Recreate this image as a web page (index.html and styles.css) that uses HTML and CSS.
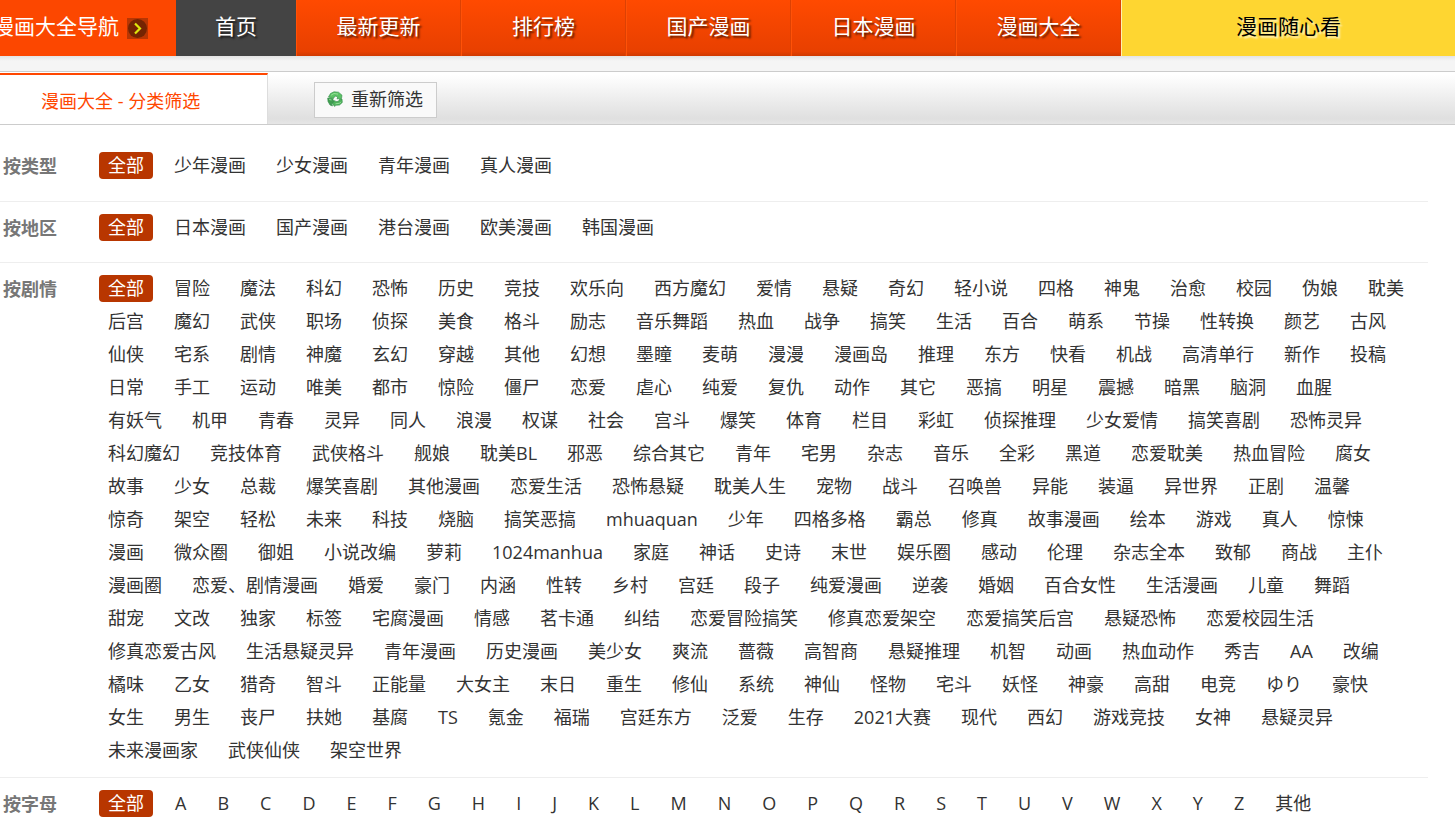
FILE: index.html
```html
<!DOCTYPE html>
<html lang="zh-CN">
<head>
<meta charset="utf-8">
<title>漫画大全 - 分类筛选</title>
<link rel="stylesheet" href="styles.css">
</head>
<body>
<header class="topbar">
  <div class="brand">
    <span class="brand-text">漫画大全导航</span>
    <svg class="brand-icon" viewBox="0 0 21 21" aria-hidden="true">
      <rect width="21" height="21" fill="#b83603"/>
      <circle cx="10.5" cy="10.5" r="9.5" fill="#742402"/>
      <path d="M8 5.500l5 5-5 5" fill="none" stroke="#dfe80c" stroke-width="2.2"/>
    </svg>
  </div>
  <nav class="menu">
    <a class="menu-item current" href="#">首页</a>
    <a class="menu-item" href="#">最新更新</a>
    <a class="menu-item" href="#">排行榜</a>
    <a class="menu-item" href="#">国产漫画</a>
    <a class="menu-item" href="#">日本漫画</a>
    <a class="menu-item" href="#">漫画大全</a>
    <a class="menu-item random" href="#">漫画随心看</a>
  </nav>
</header>
<main>
  <div class="tabs">
    <h1 class="tab">漫画大全 - 分类筛选</h1>
    <button class="reset" type="button">
      <svg class="reset-icon" viewBox="0 0 16 16" aria-hidden="true">
        <g stroke="#2f8a45" stroke-width=".6" stroke-linejoin="round">
          <path d="M1.500 6L3.500 2.500 7 .8l4.500.4 3.500 3-.5 3.300-4.500.3.8-2L8 5 6.500 7.500z" fill="#5cc266"/>
          <path d="M15 8l.3 3.500-2.800 2.500-4 .3-.8 1.200-3-3.500 3.300-2.500.8 1.200 2.700-.4 1-2z" fill="#4fb35c"/>
          <path d="M.7 7l4.800.6L7 10.500l-2.500 2 1 2.500-2.500-1L1 10.500z" fill="#3f9d50"/>
        </g>
        <path d="M4 4.200l3-1.700 4 .6M8.500 12.800l4-.5 1.500-1.500M2.200 8.500l2.300.5" fill="none" stroke="#9be29c" stroke-width=".9"/>
      </svg>
      <span>重新筛选</span>
    </button>
  </div>
  <div class="filters">
    <section class="filter">
      <h2 class="label">按类型</h2>
      <div class="options">
        <a class="active" href="#">全部</a><a href="#">少年漫画</a><a href="#">少女漫画</a><a href="#">青年漫画</a><a href="#">真人漫画</a>
      </div>
    </section>
    <section class="filter">
      <h2 class="label">按地区</h2>
      <div class="options">
        <a class="active" href="#">全部</a><a href="#">日本漫画</a><a href="#">国产漫画</a><a href="#">港台漫画</a><a href="#">欧美漫画</a><a href="#">韩国漫画</a>
      </div>
    </section>
    <section class="filter">
      <h2 class="label">按剧情</h2>
      <div class="options">
        <a class="active" href="#">全部</a><a href="#">冒险</a><a href="#">魔法</a><a href="#">科幻</a><a href="#">恐怖</a><a href="#">历史</a><a href="#">竞技</a><a href="#">欢乐向</a><a href="#">西方魔幻</a><a href="#">爱情</a><a href="#">悬疑</a><a href="#">奇幻</a><a href="#">轻小说</a><a href="#">四格</a><a href="#">神鬼</a><a href="#">治愈</a><a href="#">校园</a><a href="#">伪娘</a><a href="#">耽美</a>
        <a href="#">后宫</a><a href="#">魔幻</a><a href="#">武侠</a><a href="#">职场</a><a href="#">侦探</a><a href="#">美食</a><a href="#">格斗</a><a href="#">励志</a><a href="#">音乐舞蹈</a><a href="#">热血</a><a href="#">战争</a><a href="#">搞笑</a><a href="#">生活</a><a href="#">百合</a><a href="#">萌系</a><a href="#">节操</a><a href="#">性转换</a><a href="#">颜艺</a><a href="#">古风</a>
        <a href="#">仙侠</a><a href="#">宅系</a><a href="#">剧情</a><a href="#">神魔</a><a href="#">玄幻</a><a href="#">穿越</a><a href="#">其他</a><a href="#">幻想</a><a href="#">墨瞳</a><a href="#">麦萌</a><a href="#">漫漫</a><a href="#">漫画岛</a><a href="#">推理</a><a href="#">东方</a><a href="#">快看</a><a href="#">机战</a><a href="#">高清单行</a><a href="#">新作</a><a href="#">投稿</a>
        <a href="#">日常</a><a href="#">手工</a><a href="#">运动</a><a href="#">唯美</a><a href="#">都市</a><a href="#">惊险</a><a href="#">僵尸</a><a href="#">恋爱</a><a href="#">虐心</a><a href="#">纯爱</a><a href="#">复仇</a><a href="#">动作</a><a href="#">其它</a><a href="#">恶搞</a><a href="#">明星</a><a href="#">震撼</a><a href="#">暗黑</a><a href="#">脑洞</a><a href="#">血腥</a>
        <a href="#">有妖气</a><a href="#">机甲</a><a href="#">青春</a><a href="#">灵异</a><a href="#">同人</a><a href="#">浪漫</a><a href="#">权谋</a><a href="#">社会</a><a href="#">宫斗</a><a href="#">爆笑</a><a href="#">体育</a><a href="#">栏目</a><a href="#">彩虹</a><a href="#">侦探推理</a><a href="#">少女爱情</a><a href="#">搞笑喜剧</a><a href="#">恐怖灵异</a>
        <a href="#">科幻魔幻</a><a href="#">竞技体育</a><a href="#">武侠格斗</a><a href="#">舰娘</a><a href="#">耽美BL</a><a href="#">邪恶</a><a href="#">综合其它</a><a href="#">青年</a><a href="#">宅男</a><a href="#">杂志</a><a href="#">音乐</a><a href="#">全彩</a><a href="#">黑道</a><a href="#">恋爱耽美</a><a href="#">热血冒险</a><a href="#">腐女</a>
        <a href="#">故事</a><a href="#">少女</a><a href="#">总裁</a><a href="#">爆笑喜剧</a><a href="#">其他漫画</a><a href="#">恋爱生活</a><a href="#">恐怖悬疑</a><a href="#">耽美人生</a><a href="#">宠物</a><a href="#">战斗</a><a href="#">召唤兽</a><a href="#">异能</a><a href="#">装逼</a><a href="#">异世界</a><a href="#">正剧</a><a href="#">温馨</a>
        <a href="#">惊奇</a><a href="#">架空</a><a href="#">轻松</a><a href="#">未来</a><a href="#">科技</a><a href="#">烧脑</a><a href="#">搞笑恶搞</a><a href="#">mhuaquan</a><a href="#">少年</a><a href="#">四格多格</a><a href="#">霸总</a><a href="#">修真</a><a href="#">故事漫画</a><a href="#">绘本</a><a href="#">游戏</a><a href="#">真人</a><a href="#">惊悚</a>
        <a href="#">漫画</a><a href="#">微众圈</a><a href="#">御姐</a><a href="#">小说改编</a><a href="#">萝莉</a><a href="#">1024manhua</a><a href="#">家庭</a><a href="#">神话</a><a href="#">史诗</a><a href="#">末世</a><a href="#">娱乐圈</a><a href="#">感动</a><a href="#">伦理</a><a href="#">杂志全本</a><a href="#">致郁</a><a href="#">商战</a><a href="#">主仆</a>
        <a href="#">漫画圈</a><a href="#">恋爱、剧情漫画</a><a href="#">婚爱</a><a href="#">豪门</a><a href="#">内涵</a><a href="#">性转</a><a href="#">乡村</a><a href="#">宫廷</a><a href="#">段子</a><a href="#">纯爱漫画</a><a href="#">逆袭</a><a href="#">婚姻</a><a href="#">百合女性</a><a href="#">生活漫画</a><a href="#">儿童</a><a href="#">舞蹈</a>
        <a href="#">甜宠</a><a href="#">文改</a><a href="#">独家</a><a href="#">标签</a><a href="#">宅腐漫画</a><a href="#">情感</a><a href="#">茗卡通</a><a href="#">纠结</a><a href="#">恋爱冒险搞笑</a><a href="#">修真恋爱架空</a><a href="#">恋爱搞笑后宫</a><a href="#">悬疑恐怖</a><a href="#">恋爱校园生活</a>
        <a href="#">修真恋爱古风</a><a href="#">生活悬疑灵异</a><a href="#">青年漫画</a><a href="#">历史漫画</a><a href="#">美少女</a><a href="#">爽流</a><a href="#">蔷薇</a><a href="#">高智商</a><a href="#">悬疑推理</a><a href="#">机智</a><a href="#">动画</a><a href="#">热血动作</a><a href="#">秀吉</a><a href="#">AA</a><a href="#">改编</a>
        <a href="#">橘味</a><a href="#">乙女</a><a href="#">猎奇</a><a href="#">智斗</a><a href="#">正能量</a><a href="#">大女主</a><a href="#">末日</a><a href="#">重生</a><a href="#">修仙</a><a href="#">系统</a><a href="#">神仙</a><a href="#">怪物</a><a href="#">宅斗</a><a href="#">妖怪</a><a href="#">神豪</a><a href="#">高甜</a><a href="#">电竞</a><a href="#">ゆり</a><a href="#">豪快</a>
        <a href="#">女生</a><a href="#">男生</a><a href="#">丧尸</a><a href="#">扶她</a><a href="#">基腐</a><a href="#">TS</a><a href="#">氪金</a><a href="#">福瑞</a><a href="#">宫廷东方</a><a href="#">泛爱</a><a href="#">生存</a><a href="#">2021大赛</a><a href="#">现代</a><a href="#">西幻</a><a href="#">游戏竞技</a><a href="#">女神</a><a href="#">悬疑灵异</a>
        <a href="#">未来漫画家</a><a href="#">武侠仙侠</a><a href="#">架空世界</a>
      </div>
    </section>
    <section class="filter">
      <h2 class="label">按字母</h2>
      <div class="options letters">
        <a class="active" href="#">全部</a><a href="#">A</a><a href="#">B</a><a href="#">C</a><a href="#">D</a><a href="#">E</a><a href="#">F</a><a href="#">G</a><a href="#">H</a><a href="#">I</a><a href="#">J</a><a href="#">K</a><a href="#">L</a><a href="#">M</a><a href="#">N</a><a href="#">O</a><a href="#">P</a><a href="#">Q</a><a href="#">R</a><a href="#">S</a><a href="#">T</a><a href="#">U</a><a href="#">V</a><a href="#">W</a><a href="#">X</a><a href="#">Y</a><a href="#">Z</a><a href="#">其他</a>
      </div>
    </section>
  </div>
</main>
</body>
</html>
```
FILE: styles.css
```css
* {
  box-sizing: border-box;
}

body {
  margin: 0;
  background: #fff;
  color: #333;
  font: 18px/27px "Open Sans", "Noto Sans CJK SC", sans-serif;
  overflow-x: hidden;
}

a {
  color: inherit;
  text-decoration: none;
}

.topbar {
  display: flex;
  height: 56px;
  background: #fc4700;
  color: #fff;
  font-size: 21px;
  line-height: 52px;
}

.brand {
  flex: none;
  display: flex;
  align-items: center;
  justify-content: flex-end;
  gap: 8px;
  width: 176px;
  padding-right: 28px;
  white-space: nowrap;
}

.brand-text {
  height: 56px;
}

.brand-icon {
  flex: none;
  width: 21px;
  height: 21px;
}

.menu {
  flex: 1;
  display: flex;
}

.menu-item {
  flex: none;
  width: 165px;
  border-left: 1px solid #ff5208;
  border-right: 1px solid #dc4104;
  background: linear-gradient(#ff4a00, #e84000 92%, #cf3900);
  text-align: center;
  text-shadow: 2px 2px 2px rgba(0, 0, 0, 0.6);
}

.menu-item.current {
  width: 120px;
  border: 0;
  background: #444;
}

.menu-item.random {
  flex: 1;
  border: 0;
  border-left: 1px solid #fff0b0;
  background: #fed631;
  color: #000;
  text-shadow: 2px 2px 2px rgba(255, 255, 255, 0.8);
}

main::before {
  content: "";
  display: block;
  height: 15px;
  background: linear-gradient(#e4e4e4, #f5f5f5 5px);
}

.tabs {
  display: flex;
  align-items: flex-end;
  gap: 46px;
  height: 54px;
  border-top: 1px solid #ccc;
  border-bottom: 1px solid #ccc;
  background: linear-gradient(#fff 5%, #dfdfdf 90%, #e6e6e6);
}

.tab {
  width: 268px;
  height: 51px;
  margin: 0;
  padding-left: 41px;
  border-top: 2px solid #ff4700;
  border-right: 1px solid #ddd;
  background: #fff;
  color: #ff4700;
  font-size: 18px;
  font-weight: 400;
  line-height: 52px;
}

.reset {
  display: flex;
  align-items: center;
  gap: 8px;
  height: 36px;
  margin: 0 0 6px;
  padding: 0 13px 2px 12px;
  border: 1px solid #ccc;
  background: #f9f9f9;
  color: #333;
  font: inherit;
}

.reset-icon {
  width: 16px;
  height: 16px;
}

.filters {
  margin-right: 27px;
  padding-top: 15px;
}

.filter {
  display: flex;
  padding: 12px 0 13px;
  border-bottom: 1px solid #eee;
}

.filter:first-child {
  padding-bottom: 14px;
}

.filter:last-child {
  padding-bottom: 0;
  border-bottom: 0;
}

.label {
  flex: none;
  width: 99px;
  min-height: 35px;
  margin: 0;
  padding-left: 3px;
  color: #777;
  font-size: 18px;
  font-weight: 700;
  line-height: 29px;
}

.options {
  flex: 1;
  display: flex;
  flex-wrap: wrap;
  align-content: flex-start;
  gap: 6px 12px;
  padding-right: 8px;
}

.options.letters {
  column-gap: 13px;
}

.options a {
  height: 27px;
  padding: 0 9px;
  border-radius: 4px;
  white-space: nowrap;
}

.options .active {
  background: #b83600;
  color: #fff;
}
```
